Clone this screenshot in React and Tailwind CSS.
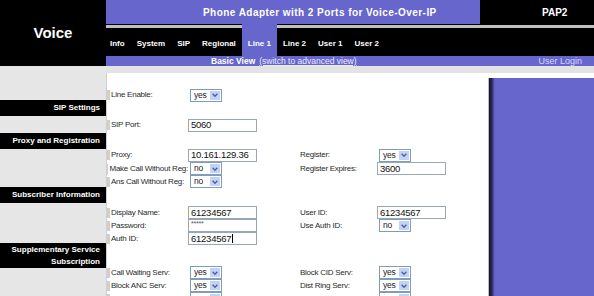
import React from 'react';

const Chevron = () => (
  <svg width="8" height="8" viewBox="0 0 10 10">
    <path d="M2 3.5 L5 6.5 L8 3.5" fill="none" stroke="#4a64a0" strokeWidth="1.8" />
  </svg>
);

const Sel = ({ v }) => (
  <div className="ml-[2px] flex h-[13px] w-[32px] border border-[#7f9db9] bg-white">
    <span className="flex-1 pl-[3px] text-[8.5px] leading-[11px] text-[#222]">{v}</span>
    <div className="flex w-[12px] items-center justify-center border border-white bg-[#c3d2f7]">
      <Chevron />
    </div>
  </div>
);

const Inp = ({ v, stars, cursor }) => (
  <div className="flex h-[13px] w-[69px] items-center border border-[#9aa6b4] bg-white pl-[2px] text-[9.5px] leading-none text-[#111]">
    {stars ? <span className="self-start text-[7px] leading-[7px] text-[#555]">*****</span> : v}
    {cursor && <span className="ml-[1px] h-[9px] w-[1px] bg-black" />}
  </div>
);

const Row = ({ h = 'h-[13px]', l1, c1, l2, c2 }) => (
  <div className={`flex shrink-0 items-center ${h}`}>
    <div className="flex h-full w-[81px] items-center">
      <div className="h-[10px] w-[3px] bg-[#cfcfcf]" />
      <span className="ml-[1px] whitespace-nowrap">{l1}</span>
    </div>
    <div className="w-[112px]">{c1}</div>
    <div className="w-[77px] whitespace-nowrap">{l2}</div>
    <div>{c2}</div>
  </div>
);

const Bar = ({ h = 'h-[16px]', children }) => (
  <div className={`flex shrink-0 flex-col items-end justify-center bg-black pr-[6px] text-[8px] font-bold leading-[12px] text-white ${h}`}>
    {children}
  </div>
);

const Gap = ({ h }) => <div className={`shrink-0 ${h}`} />;

const tabs = ['Info', 'System', 'SIP', 'Regional', 'Line 1', 'Line 2', 'User 1', 'User 2'];

export default function App() {
  return (
    <div className="flex h-[296px] w-[594px] overflow-hidden bg-[#e6e6e6] font-['Liberation_Sans',Arial,sans-serif]">
      {/* left column */}
      <div className="flex w-[106px] shrink-0 flex-col">
        <div className="flex h-[66px] shrink-0 items-center justify-center bg-black text-[15px] font-bold text-white">Voice</div>
        <Gap h="h-[34px]" />
        <Bar>SIP Settings</Bar>
        <Gap h="h-[17px]" />
        <Bar>Proxy and Registration</Bar>
        <Gap h="h-[38px]" />
        <Bar>Subscriber Information</Bar>
        <Gap h="h-[40px]" />
        <Bar h="h-[25px]">
          <span>Supplementary Service</span>
          <span>Subscription</span>
        </Bar>
      </div>

      {/* main */}
      <div className="flex min-w-0 flex-1 flex-col">
        <div className="flex h-[24px] shrink-0">
          <div className="flex flex-1 items-center bg-[#6666cc] pl-[97px] text-[10px] font-bold tracking-[0.45px] text-white">
            Phone Adapter with 2 Ports for Voice-Over-IP
          </div>
          <div className="flex w-[114px] items-center bg-black pl-[62px] text-[10px] font-bold text-white">PAP2</div>
        </div>
        <div className="flex h-[32px] shrink-0 bg-black shadow-[inset_0_1px_0_#000,inset_0_4px_0_#c0c0c0]">
          {tabs.map((t, i) => (
            <div
              key={t}
              className={`flex items-center pt-[8px] text-[8px] font-bold text-white ${i === 0 ? 'pl-[4px] pr-[6px]' : 'px-[6px]'} ${t === 'Line 1' ? 'bg-[#6666cc]' : ''}`}
            >
              {t}
            </div>
          ))}
        </div>
        <div className="flex h-[10px] shrink-0 items-center bg-[#6666cc] pl-[105px] pr-[12px] text-[8.5px] leading-none">
          <span className="font-bold text-white">Basic View</span>
          <span className="ml-[4px] text-[#ececff] underline">(switch to advanced view)</span>
          <span className="ml-auto text-[9px] text-[#d6d6ff]">User Login</span>
        </div>
        <div className="h-[7px] shrink-0 bg-[#e3e3e3]" />

        <div className="flex min-h-0 flex-1 overflow-hidden border-l border-[#cfcfcf] bg-white">
          <div className="flex flex-1 flex-col text-[8px] tracking-[-0.25px] text-[#2a2a2a]">
            <Gap h="h-[15px]" />
            <Row h="h-[14px]" l1="Line Enable:" c1={<Sel v="yes" />} />
            <Gap h="h-[16px]" />
            <Row h="h-[14px]" l1="SIP Port:" c1={<Inp v="5060" />} />
            <Gap h="h-[16px]" />
            <Row h="h-[14px]" l1="Proxy:" c1={<Inp v="10.161.129.36" />} l2="Register:" c2={<Sel v="yes" />} />
            <Row l1="Make Call Without Reg:" c1={<Sel v="no" />} l2="Register Expires:" c2={<Inp v="3600" />} />
            <Row l1="Ans Call Without Reg:" c1={<Sel v="no" />} />
            <Gap h="h-[18px]" />
            <Row l1="Display Name:" c1={<Inp v="61234567" />} l2="User ID:" c2={<Inp v="61234567" />} />
            <Row l1="Password:" c1={<Inp stars />} l2="Use Auth ID:" c2={<Sel v="no" />} />
            <Row l1="Auth ID:" c1={<Inp v="61234567" cursor />} />
            <Gap h="h-[21px]" />
            <Row l1="Call Waiting Serv:" c1={<Sel v="yes" />} l2="Block CID Serv:" c2={<Sel v="yes" />} />
            <Row l1="Block ANC Serv:" c1={<Sel v="yes" />} l2="Dist Ring Serv:" c2={<Sel v="yes" />} />
            <Row c1={<Sel v="" />} c2={<Sel v="" />} />
          </div>
          <div className="mt-[5px] w-[106px] shrink-0 border-l border-[#bdbdbd] bg-[linear-gradient(to_right,#15152e_0px,#2a2a5a_3px,#5a5ab8_5px,#6666cc_6px)]" />
        </div>
      </div>
    </div>
  );
}
